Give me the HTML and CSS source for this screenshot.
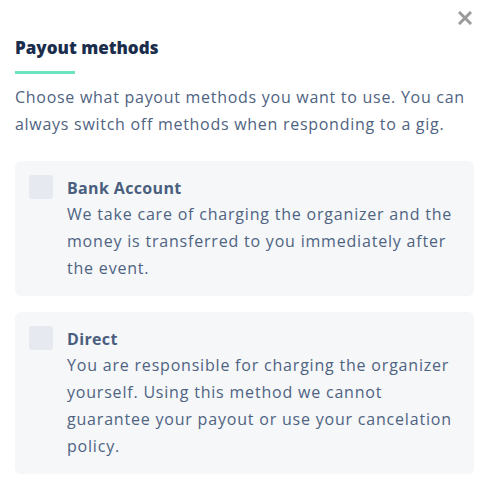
FILE: index.html
```html
<!DOCTYPE html>
<html>
<head>
<meta charset="utf-8">
<link rel="stylesheet" href="styles.css">
</head>
<body>
<div class="modal">
  <button class="close" aria-label="Close">
    <svg width="14" height="14" viewBox="0 0 14 14"><path d="M2 2 L12 12 M12 2 L2 12" stroke="#9a9a9a" stroke-width="3" stroke-linecap="square"/></svg>
  </button>
  <h2 class="title">Payout methods</h2>
  <div class="bar"></div>
  <p class="intro">Choose what payout methods you want to use. You can always switch off methods when responding to a gig.</p>
  <div class="options">
    <label class="option">
      <span class="check"></span>
      <span class="text">
        <span class="name">Bank Account</span>
        <span class="desc">We take care of charging the organizer and the money is transferred to you immediately after the event.</span>
      </span>
    </label>
    <label class="option">
      <span class="check"></span>
      <span class="text">
        <span class="name">Direct</span>
        <span class="desc">You are responsible for charging the organizer yourself. Using this method we cannot guarantee your payout or use your cancelation policy.</span>
      </span>
    </label>
  </div>
</div>
</body>
</html>
```
FILE: styles.css
```css
html, body { margin: 0; padding: 0; background: #fff; }
body { font-family: "Open Sans", Lato, sans-serif; color: #4f6382; }
.modal { position: relative; padding: 35px 19px 0 15px; }
.close { position: absolute; top: 11px; right: 21px; border: 0; background: none; padding: 0; width: 14px; height: 14px; display: block; }
.close svg { display: block; }
.title { margin: 0; font-size: 17px; line-height: 26px; font-weight: 800; color: #1b2d4c; letter-spacing: 0; }
.bar { width: 60px; height: 3px; background: #6ee3c1; margin-top: 10px; }
.intro { margin: 10px 0 0; font-size: 16px; line-height: 27px; letter-spacing: 0.72px; }
.options { display: flex; flex-direction: column; gap: 16px; margin-top: 23px; }
.option { display: flex; gap: 14px; background: #f5f7f9; border-radius: 6px; padding: 14px; }
.check { flex: none; width: 24px; height: 24px; border-radius: 3px; background: #e6eaf0; margin-top: 0; }
.text { display: flex; flex-direction: column; }
.name { font-size: 16px; line-height: 26px; font-weight: 700; color: #4a5e7e; letter-spacing: 0.35px; }
.desc { font-size: 16px; line-height: 27px; letter-spacing: 0.8px; }
```
